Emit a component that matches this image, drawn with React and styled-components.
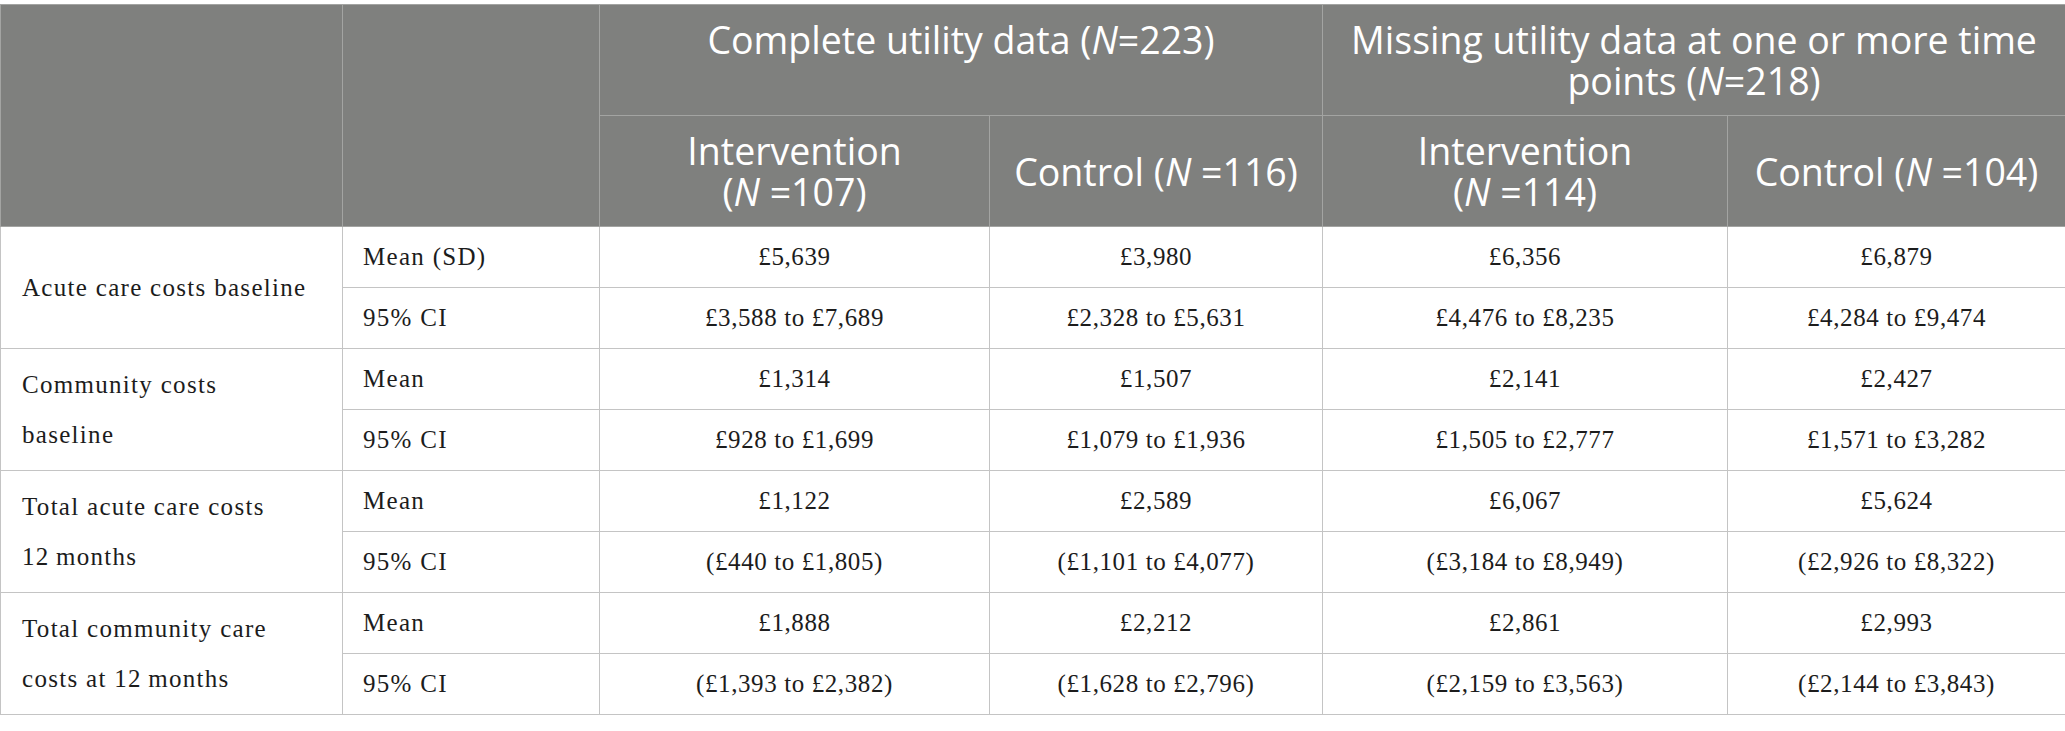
import React from "react";
import styled, { createGlobalStyle } from "styled-components";

const Global = createGlobalStyle`
  html, body { margin: 0; padding: 0; background: #ffffff; }
`;

const Page = styled.div`
  padding-top: 4px;
  width: 2065px;
`;

const Table = styled.table`
  width: 2065px;
  border-collapse: collapse;
  table-layout: fixed;
`;

const HeadCell = styled.th`
  background: #7f807e;
  color: #ffffff;
  font-family: "Open Sans", "Noto Sans", sans-serif;
  font-weight: 400;
  font-size: 37.5px;
  line-height: 41px;
  text-align: center;
  vertical-align: ${(p) => (p.$top ? "top" : "middle")};
  padding: 14px 16px;
  border: 1px solid #a3a4a2;
  em { font-style: italic; }
`;

const Cell = styled.td`
  font-family: "Liberation Serif", "Times New Roman", serif;
  font-size: 25px;
  letter-spacing: ${(p) => (p.$left ? "1.3px" : "0.6px")};
  line-height: 50px;
  color: #1c1c1c;
  padding: ${(p) => (p.$label ? "5px 30px 5px 21px" : "5px 20px")};
  border: 1px solid #c4c4c4;
  text-align: ${(p) => (p.$left ? "left" : "center")};
  vertical-align: middle;
`;

const widths = [342, 257, 390, 333, 405, 338];

const rows = [
  {
    label: "Acute care costs baseline",
    lines: [
      ["Mean (SD)", "£5,639", "£3,980", "£6,356", "£6,879"],
      ["95% CI", "£3,588 to £7,689", "£2,328 to £5,631", "£4,476 to £8,235", "£4,284 to £9,474"],
    ],
  },
  {
    label: "Community costs baseline",
    lines: [
      ["Mean", "£1,314", "£1,507", "£2,141", "£2,427"],
      ["95% CI", "£928 to £1,699", "£1,079 to £1,936", "£1,505 to £2,777", "£1,571 to £3,282"],
    ],
  },
  {
    label: "Total acute care costs 12\u202Fmonths",
    lines: [
      ["Mean", "£1,122", "£2,589", "£6,067", "£5,624"],
      ["95% CI", "(£440 to £1,805)", "(£1,101 to £4,077)", "(£3,184 to £8,949)", "(£2,926 to £8,322)"],
    ],
  },
  {
    label: "Total community care costs at 12\u202Fmonths",
    lines: [
      ["Mean", "£1,888", "£2,212", "£2,861", "£2,993"],
      ["95% CI", "(£1,393 to £2,382)", "(£1,628 to £2,796)", "(£2,159 to £3,563)", "(£2,144 to £3,843)"],
    ],
  },
];

export default function App() {
  return (
    <Page>
      <Global />
      <Table>
        <colgroup>
          {widths.map((w, i) => (
            <col key={i} style={{ width: w }} />
          ))}
        </colgroup>
        <thead>
          <tr>
            <HeadCell rowSpan={2} />
            <HeadCell rowSpan={2} />
            <HeadCell colSpan={2} $top>
              Complete utility data (<em>N</em>=223)
            </HeadCell>
            <HeadCell colSpan={2} $top>
              Missing utility data at one or more time points (<em>N</em>=218)
            </HeadCell>
          </tr>
          <tr>
            <HeadCell>
              Intervention
              <br />(<em>N</em> =107)
            </HeadCell>
            <HeadCell>
              Control (<em>N</em> =116)
            </HeadCell>
            <HeadCell>
              Intervention
              <br />(<em>N</em> =114)
            </HeadCell>
            <HeadCell>
              Control (<em>N</em> =104)
            </HeadCell>
          </tr>
        </thead>
        <tbody>
          {rows.map((r) =>
            r.lines.map((line, li) => (
              <tr key={r.label + li}>
                {li === 0 && (
                  <Cell rowSpan={2} $left $label>
                    {r.label}
                  </Cell>
                )}
                {line.map((v, vi) => (
                  <Cell key={vi} $left={vi === 0}>
                    {v}
                  </Cell>
                ))}
              </tr>
            ))
          )}
        </tbody>
      </Table>
    </Page>
  );
}
